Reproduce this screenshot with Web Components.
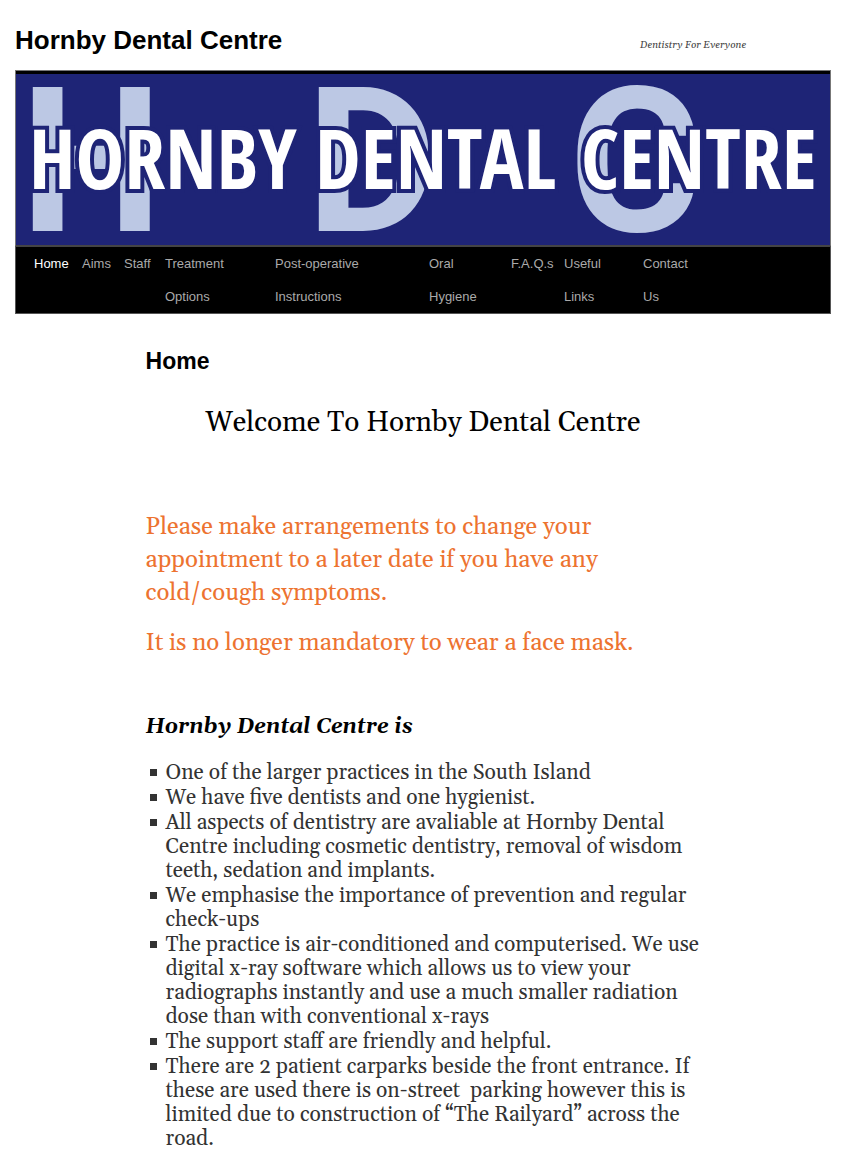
<!DOCTYPE html>
<html lang="en">
<head>
<meta charset="utf-8">
<meta name="viewport" content="width=device-width, initial-scale=1">
<title>Hornby Dental Centre</title>
<style>
body { margin: 0; background: #fff; color: #333; font-family: Gelasio, Georgia, "Liberation Serif", serif; }
</style>
</head>
<body>
<dental-page>
  <site-header slot="header" tagline="Dentistry For Everyone">Hornby Dental Centre</site-header>
  <site-banner slot="header"></site-banner>
  <site-menu slot="header"></site-menu>
  <page-article heading="Home">
    <welcome-line>Welcome To Hornby Dental Centre</welcome-line>
    <notice-text>
      <p>Please make arrangements to change your appointment to a later date if you have any cold/cough symptoms.</p>
      <p>It is no longer mandatory to wear a face mask.</p>
    </notice-text>
    <feature-list heading="Hornby Dental Centre is"></feature-list>
  </page-article>
</dental-page>

<script>
const attach = (el, html) => { el.attachShadow({ mode: 'open' }).innerHTML = html; };

customElements.define('dental-page', class extends HTMLElement {
  constructor() {
    super();
    attach(this, `<style>
      :host { display: block; padding: 0 15px; }
      main { width: 68%; margin: 0 auto; padding: 33px 0 10px; }
    </style>
    <header><slot name="header"></slot></header>
    <main><slot></slot></main>`);
  }
});

customElements.define('site-header', class extends HTMLElement {
  constructor() {
    super();
    attach(this, `<style>
      :host { display: flex; align-items: center; justify-content: space-between; padding: 25px 0 15px; }
      h1 { margin: 0; font: bold 26px/30px "Liberation Sans", Arial, sans-serif; }
      a { color: #000; text-decoration: none; }
      p { margin: 0; padding-top: 10px; width: 191px; font-size: 10px; line-height: 12px; font-style: italic; color: #444; }
    </style>
    <h1><a href="#"><slot></slot></a></h1>
    <p>${this.getAttribute('tagline')}</p>`);
  }
});

customElements.define('site-banner', class extends HTMLElement {
  constructor() {
    super();
    attach(this, `<style>
      :host { display: block; border: 1px solid #777; border-bottom: 2px solid #444; }
      svg { display: block; width: 100%; height: auto; overflow: visible; border-top: 3px solid #000; background: #1e2476; box-sizing: border-box; }
      .initial { font: bold 202px Roboto, sans-serif; fill: #bcc8e4; }
      .word { font: bold 82px "Open Sans Condensed", "Roboto Condensed", sans-serif; fill: #fff; stroke: #1e2476; stroke-width: 8; paint-order: stroke; }
    </style>
    <svg viewBox="0 0 814 171" role="img" aria-label="Hornby Dental Centre">
      <g class="initial">
        <text x="4" y="157">H</text><text x="290" y="157">D</text><text x="553" y="157">C</text>
      </g>
      <g class="word">
        <text x="13" y="115">HORNBY</text><text x="299" y="115">DENTAL</text><text x="565" y="115">CENTRE</text>
      </g>
    </svg>`);
  }
});

customElements.define('site-menu', class extends HTMLElement {
  constructor() {
    super();
    attach(this, `<style>
      :host { display: block; background: #000; border: 1px solid #555; border-top: 0; }
      ul { display: grid; grid-template-columns: 48px 42px 41px 110px 154px 82px 53px 79px 1fr; margin: 0; padding: 0 18px; list-style: none; }
      a { display: block; color: #aaa; text-decoration: none; font: 13px/33px "Liberation Sans", Arial, sans-serif; white-space: nowrap; }
      a[aria-current] { color: #fff; }
    </style>
    <nav><ul>
      <li><a href="#" aria-current="page">Home</a></li>
      <li><a href="#">Aims</a></li>
      <li><a href="#">Staff</a></li>
      <li><a href="#">Treatment<br>Options</a></li>
      <li><a href="#">Post-operative<br>Instructions</a></li>
      <li><a href="#">Oral<br>Hygiene</a></li>
      <li><a href="#">F.A.Q.s</a></li>
      <li><a href="#">Useful<br>Links</a></li>
      <li><a href="#">Contact<br>Us</a></li>
    </ul></nav>`);
  }
});

customElements.define('page-article', class extends HTMLElement {
  constructor() {
    super();
    attach(this, `<style>
      :host { display: block; }
      h2 { margin: 0 0 30px; color: #000; font: bold 23px/28px "Liberation Sans", Arial, sans-serif; }
    </style>
    <article><h2>${this.getAttribute('heading')}</h2><slot></slot></article>`);
  }
});

customElements.define('welcome-line', class extends HTMLElement {
  constructor() {
    super();
    attach(this, `<style>
      :host { display: block; margin-bottom: 70px; }
      p { margin: 0; color: #000; font-size: 28px; line-height: 36px; text-align: center; }
    </style><p><slot></slot></p>`);
  }
});

customElements.define('notice-text', class extends HTMLElement {
  constructor() {
    super();
    attach(this, `<style>
      :host { display: block; margin-bottom: 55px; color: #ed7330; font-size: 24px; line-height: 33px; }
      ::slotted(p) { margin: 0 0 17px; }
      ::slotted(p:last-child) { margin-bottom: 0; }
    </style><slot></slot>`);
  }
});

customElements.define('feature-list', class extends HTMLElement {
  constructor() {
    super();
    const items = [
      'One of the larger practices in the South Island',
      'We have five dentists and one hygienist.',
      'All aspects of dentistry are avaliable at Hornby Dental Centre including cosmetic dentistry, removal of wisdom teeth, sedation and implants.',
      'We emphasise the importance of prevention and regular check-ups',
      'The practice is air-conditioned and computerised. We use digital x-ray software which allows us to view your radiographs instantly and use a much smaller radiation dose than with conventional x-rays',
      'The support staff are friendly and helpful.',
      'There are 2 patient carparks beside the front entrance. If these are used there is on-street&nbsp; parking however this is limited due to construction of “The Railyard” across the road.'
    ];
    attach(this, `<style>
      :host { display: block; font-size: 21px; line-height: 24px; }
      h3 { margin: 0 0 22px; color: #000; font-size: 21px; font-style: italic; }
      ul { margin: 0; padding: 0; list-style: none; }
      li { display: grid; grid-template-columns: 20px 1fr; margin-bottom: 1px; }
      li::before { content: ""; width: 7px; height: 7px; margin: 8px 0 0 4px; background: currentColor; }
    </style>
    <h3>${this.getAttribute('heading')}</h3>
    <ul>${items.map(t => `<li>${t}</li>`).join('')}</ul>`);
  }
});
</script>
</body>
</html>
